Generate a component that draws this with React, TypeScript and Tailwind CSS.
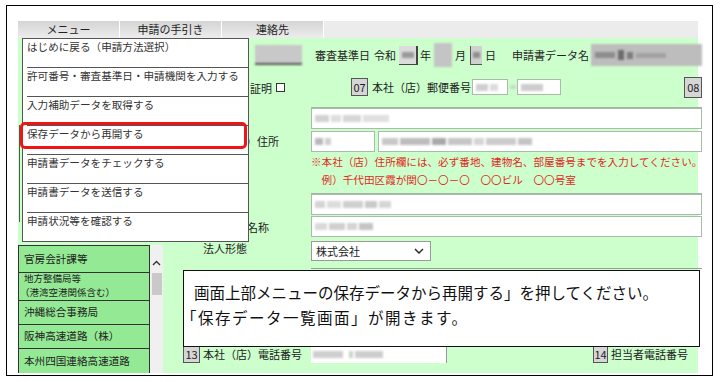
import React from "react";

type Patch = { w: number; c: string };

// blurred placeholder for masked values in the screenshot
function Smudge({ patches, className = "" }: { patches: Patch[]; className?: string }) {
  return (
    <div className={`flex items-center gap-[2px] blur-[1.2px] ${className}`}>
      {patches.map((p, i) => (
        <span key={i} className={`h-[7px] shrink-0 ${p.c}`} style={{ width: p.w }} />
      ))}
    </div>
  );
}

function Field({ className = "", children }: { className?: string; children?: React.ReactNode }) {
  return (
    <div className={`bg-white border border-[#a9bba9] flex items-center pl-[3px] overflow-hidden ${className}`}>
      {children}
    </div>
  );
}

function NumBox({ n, className = "" }: { n: string; className?: string }) {
  return (
    <span
      className={`flex items-center justify-center bg-[#d6d6d6] border border-[#555] text-[11px] leading-none text-[#222] ${className}`}
    >
      {n}
    </span>
  );
}

const tabs = ["メニュー", "申請の手引き", "連絡先"];

const menuItems = [
  "はじめに戻る（申請方法選択）",
  "許可番号・審査基準日・申請機関を入力する",
  "入力補助データを取得する",
  "保存データから再開する",
  "申請書データをチェックする",
  "申請書データを送信する",
  "申請状況等を確認する",
];

export default function App() {
  return (
    <div className="w-[720px] h-[382px] bg-white pl-[6px] pt-[5px] font-['Noto_Sans_CJK_JP','Noto_Sans',sans-serif] text-[#222]">
      <div className="w-[707px] h-[371px] border border-black pl-[11px] pt-[15px]">
        <div className="w-[680px] h-[347px] flex flex-col">
          {/* tab bar */}
          <div className="flex h-[22px] bg-[#ececec]">
            {tabs.map((t) => (
              <div
                key={t}
                className="w-[102px] flex items-center justify-center border-r border-white bg-linear-to-b from-[#d4d4d4] to-[#ededed] text-[11px]"
              >
                {t}
              </div>
            ))}
          </div>

          {/* green form area */}
          <div className="relative flex-1 bg-[#ccffcc] grid grid-cols-[145px_1fr] text-[11px] leading-[14px]">
            {/* left column: office list */}
            <div className="flex flex-col">
              <div className="h-[207px] pt-[87px] pl-[1px]">
                <div className="w-px h-[97px] bg-[#555]" />
              </div>
              <div className="flex flex-1 overflow-hidden">
                <div className="w-[132px] flex flex-col border-x border-t border-[#333] text-[10.6px]">
                  <div className="h-[27px] shrink-0 bg-[#94ea94] border-b border-[#333] flex items-center pl-[5px]">
                    官房会計課等
                  </div>
                  <div className="h-[28px] shrink-0 bg-[#94ea94] border-b border-[#333] flex flex-col justify-center pl-[5px] text-[9.5px] leading-[13.8px]">
                    <span>地方整備局等</span>
                    <span className="-ml-[4px]">（港湾空港関係含む）</span>
                  </div>
                  <div className="h-[24px] shrink-0 bg-[#94ea94] border-b border-[#333] flex items-center pl-[5px]">
                    沖縄総合事務局
                  </div>
                  <div className="h-[24px] shrink-0 bg-[#94ea94] border-b border-[#333] flex items-center pl-[5px]">
                    阪神高速道路（株）
                  </div>
                  <div className="h-[24px] shrink-0 bg-[#94ea94] flex items-start pt-[5px] pl-[5px]">
                    本州四国連絡高速道路
                  </div>
                </div>
                <div className="w-[13px] bg-[#f0f0f0] flex flex-col items-center">
                  <svg width="9" height="6" viewBox="0 0 9 6" className="mt-[15px]">
                    <path d="M1 5 L4.5 1.5 L8 5" fill="none" stroke="#333" strokeWidth="1.4" />
                  </svg>
                  <div className="mt-[7px] w-[10px] h-[22px] bg-[#c9c9c9]" />
                </div>
              </div>
            </div>

            {/* right column: form rows */}
            <div className="grid grid-cols-[148px_1fr] grid-rows-[30px_40px_86px_45px_30px_77px_17px]">
              {/* row 1 */}
              <div className="flex items-center pt-[5px]">
                <div className="ml-[92px] w-[47px] h-[20px] bg-[#c8c8c8] border-b-2 border-[#555] blur-[1px]" />
              </div>
              <div className="flex items-center pt-[5px]">
                <span className="ml-[4px]">審査基準日</span>
                <span className="ml-[4px]">令和</span>
                <span className="ml-[3px] w-[19px] h-[19px] bg-[#dcdcdc] border-r-2 border-b border-[#444] flex items-center justify-center">
                  <span className="w-[12px] h-[6px] bg-[#9a9a9a] blur-[1px]" />
                </span>
                <span className="ml-[2px]">年</span>
                <span className="ml-[3px] w-[18px] h-[24px] bg-[#c4c4c4] blur-[1px]" />
                <span className="ml-[3px]">月</span>
                <span className="ml-[4px] w-[12px] h-[19px] bg-[#d0d0d0] border-l border-b border-[#555] flex items-center justify-center">
                  <span className="w-[7px] h-[6px] bg-[#8f8f8f] blur-[1px]" />
                </span>
                <span className="ml-[3px]">日</span>
                <span className="ml-[16px]">申請書データ名</span>
                <div className="ml-[2px] flex-1 h-[22px] bg-[#bdbdbd] blur-[1.2px] flex items-center pl-[4px] gap-[3px]">
                  <span className="w-[20px] h-[6px] bg-[#8d8d8d]" />
                  <span className="w-[6px] h-[10px] bg-[#6c6c6c]" />
                  <span className="w-[6px] h-[7px] bg-[#7d7d7d]" />
                  <span className="w-[30px] h-[5px] bg-[#a2a2a2]" />
                </div>
              </div>

              {/* row 2 */}
              <div className="flex items-center">
                <span className="ml-[87px]">証明</span>
                <span className="ml-[4px] w-[9px] h-[9px] bg-white border border-[#333]" />
              </div>
              <div className="flex items-center border-b border-[#a3b5a3]">
                <NumBox n="07" className="ml-[40px] w-[17px] h-[18px]" />
                <span className="ml-[4px]">本社（店）郵便番号</span>
                <Field className="ml-[1px] w-[36px] h-[16px]">
                  <Smudge patches={[{ w: 12, c: "bg-[#cfcfcf]" }, { w: 8, c: "bg-[#dcdcdc]" }]} />
                </Field>
                <span className="ml-[2px] w-[6px] h-[4px] bg-[#c9d9c9] blur-[1px]" />
                <Field className="ml-[1px] w-[44px] h-[16px]">
                  <Smudge patches={[{ w: 22, c: "bg-[#cdcdcd]" }]} />
                </Field>
                <NumBox n="08" className="ml-auto w-[18px] h-[21px]" />
              </div>

              {/* row 3 */}
              <div className="flex justify-end pr-[32px] pt-[26px] overflow-hidden">
                <span className="whitespace-nowrap">本社（店）住所</span>
              </div>
              <div className="flex flex-col border-b border-[#a3b5a3]">
                <Field className="h-[21px]">
                  <Smudge
                    patches={[
                      { w: 14, c: "bg-[#d2d2d2]" },
                      { w: 10, c: "bg-[#dedede]" },
                      { w: 18, c: "bg-[#d6d6d6]" },
                      { w: 26, c: "bg-[#e0e0e0]" },
                    ]}
                  />
                </Field>
                <div className="mt-[2px] flex h-[21px] gap-[3px]">
                  <Field className="w-[64px]">
                    <Smudge patches={[{ w: 8, c: "bg-[#b9b9b9]" }, { w: 6, c: "bg-[#cfcfcf]" }]} />
                  </Field>
                  <Field className="flex-1">
                    <Smudge
                      patches={[
                        { w: 16, c: "bg-[#c8c8c8]" },
                        { w: 30, c: "bg-[#bdbdbd]" },
                        { w: 14, c: "bg-[#a9a9a9]" },
                        { w: 24, c: "bg-[#c6c6c6]" },
                        { w: 10, c: "bg-[#d5d5d5]" },
                        { w: 30, c: "bg-[#cbcbcb]" },
                        { w: 14, c: "bg-[#c4c4c4]" },
                      ]}
                    />
                  </Field>
                </div>
                <div className="mt-[1px] text-[10.6px] leading-[18px] text-[#e41f1f] whitespace-nowrap">
                  <div>※本社（店）住所欄には、必ず番地、建物名、部屋番号までを入力してください。</div>
                  <div>　例）千代田区霞が関〇－〇－〇　〇〇ビル　〇〇号室</div>
                </div>
              </div>

              {/* row 4 */}
              <div className="flex justify-end pr-[42px] pt-[26px] overflow-hidden">
                <span className="whitespace-nowrap">商号又は名称</span>
              </div>
              <div className="flex flex-col gap-px">
                <Field className="h-[21px]">
                  <Smudge
                    patches={[
                      { w: 10, c: "bg-[#d4d4d4]" },
                      { w: 14, c: "bg-[#dcdcdc]" },
                      { w: 20, c: "bg-[#cfcfcf]" },
                      { w: 12, c: "bg-[#c9c9c9]" },
                      { w: 12, c: "bg-[#d6d6d6]" },
                    ]}
                  />
                </Field>
                <Field className="h-[21px]">
                  <Smudge
                    patches={[
                      { w: 12, c: "bg-[#d9d9d9]" },
                      { w: 16, c: "bg-[#cfcfcf]" },
                      { w: 10, c: "bg-[#d4d4d4]" },
                      { w: 14, c: "bg-[#c4c4c4]" },
                    ]}
                  />
                </Field>
              </div>

              {/* row 5 */}
              <div className="pt-[2px]">
                <span className="ml-[40px]">法人形態</span>
              </div>
              <div className="border-b border-[#8fa38f]">
                <div className="mt-[2px] w-[120px] h-[20px] bg-white border border-[#9a9a9a] flex items-center pl-[4px] pr-[6px]">
                  <span>株式会社</span>
                  <svg width="10" height="6" viewBox="0 0 10 6" className="ml-auto">
                    <path d="M1 1 L5 5 L9 1" fill="none" stroke="#222" strokeWidth="1.4" />
                  </svg>
                </div>
              </div>

              {/* row 6 (under the note) */}
              <div />
              <div />

              {/* row 7 */}
              <div className="flex items-center">
                <NumBox n="13" className="ml-[20px] w-[17px] h-[17px]" />
                <span className="ml-[3px] whitespace-nowrap">本社（店）電話番号</span>
              </div>
              <div className="flex items-center">
                <div className="w-[136px] h-[17px] bg-white border-r border-[#999] flex items-center gap-[6px] pl-[2px]">
                  <Smudge patches={[{ w: 30, c: "bg-[#cfcfcf]" }]} />
                  <Smudge patches={[{ w: 4, c: "bg-[#c4d8c4]" }, { w: 28, c: "bg-[#cdcdcd]" }]} />
                </div>
                <NumBox n="14" className="ml-[146px] w-[15px] h-[17px]" />
                <span className="ml-[3px] whitespace-nowrap">担当者電話番号</span>
              </div>
            </div>

            {/* dropdown menu */}
            <div className="absolute left-[4px] top-0 w-[227px] bg-white border border-[#555] flex flex-col">
              {menuItems.map((m, i) => (
                <div key={m} className={`${i < 6 ? "h-[29px]" : "h-[28px]"} flex flex-col`}>
                  <div className="flex-1 pl-[4px] pt-px text-[10.6px] leading-[14px] text-[#333] whitespace-nowrap">
                    {m}
                  </div>
                  {i < 6 && <div className="ml-[4px] h-px bg-[#555]" />}
                </div>
              ))}
            </div>

            {/* highlight around the item */}
            <div className="absolute left-[2px] top-[84px] w-[227px] h-[27px] border-[3px] border-[#f01414] rounded-[5px]" />

            {/* note */}
            <div className="absolute left-[165px] top-[232px] w-[517px] h-[77px] bg-white border border-[#111] pt-[9px] pl-[10px] text-[15.5px] leading-[25px] text-[#111] whitespace-nowrap">
              <div>画面上部メニューの保存データから再開する」を押してください。</div>
              <div className="-ml-[13px] tracking-[1.5px]">「保存データ一覧画面」が開きます。</div>
            </div>
          </div>
        </div>
      </div>
    </div>
  );
}
